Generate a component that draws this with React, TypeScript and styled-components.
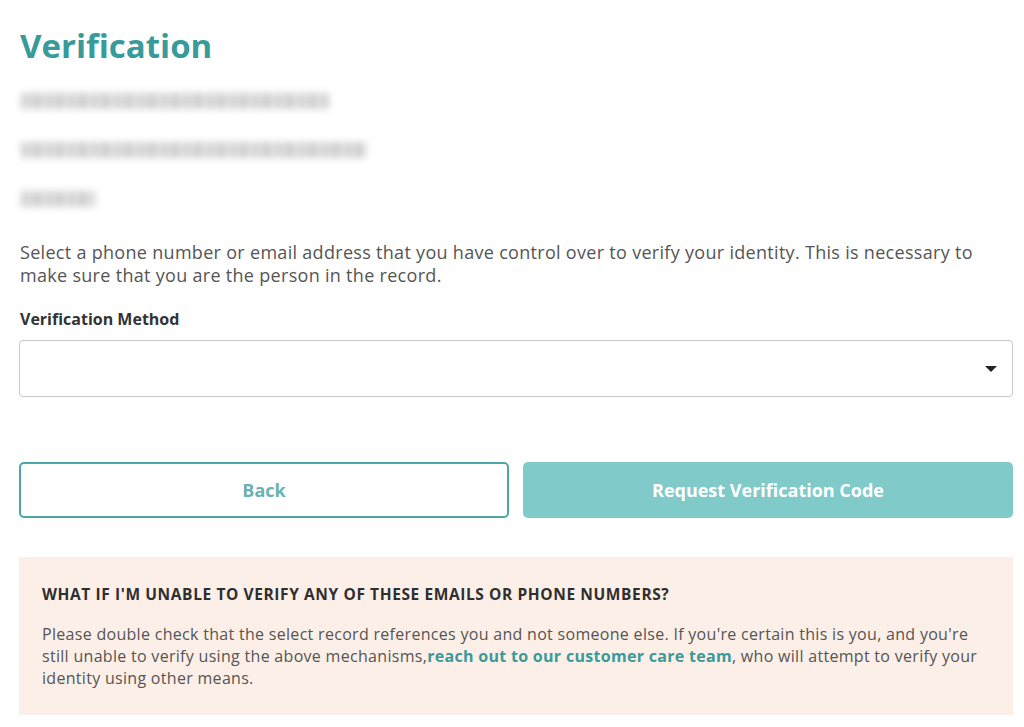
import React from "react";
import styled, { createGlobalStyle } from "styled-components";

const GlobalStyle = createGlobalStyle`
  body {
    margin: 0;
    background: #fff;
    font-family: "Open Sans", Lato, sans-serif;
    color: #4a4a4a;
  }
`;

const StyledPage = styled.div`
  padding: 24px 11px 0 19px;
  display: flex;
  flex-direction: column;
`;

const StyledTitle = styled.h1`
  margin: 0 0 0 1px;
  font-size: 33px;
  font-weight: 700;
  color: #389b9b;
  line-height: 44px;
`;

const StyledBlurredLines = styled.div`
  display: flex;
  flex-direction: column;
  gap: 33px;
  margin-top: 25px;
  padding-left: 2px;
`;

const StyledBlurLine = styled.div<{ $width: number }>`
  width: ${(p) => p.$width}px;
  height: 16px;
  background: repeating-linear-gradient(90deg, #c4c4c4 0 9px, #e4e4e4 9px 12px, #b8b8b8 12px 20px, #ededed 20px 23px);
  filter: blur(3.5px);
  opacity: 0.75;
`;

const StyledIntro = styled.p`
  margin: 34px 0 0 1px;
  font-size: 18px;
  letter-spacing: 0.3px;
  line-height: 23px;
  color: #555;
  white-space: nowrap;
`;

const StyledLabel = styled.label`
  display: block;
  margin: 21px 0 0 1px;
  font-size: 16px;
  line-height: 22px;
  font-weight: 700;
  color: #333;
`;

const StyledSelect = styled.div`
  margin-top: 10px;
  height: 57px;
  box-sizing: border-box;
  border: 1px solid #c8c8c8;
  border-radius: 4px;
  display: flex;
  align-items: center;
  justify-content: flex-end;
  padding-right: 15px;
`;

const StyledCaret = styled.span`
  width: 0;
  height: 0;
  border-left: 6px solid transparent;
  border-right: 6px solid transparent;
  border-top: 6px solid #222;
`;

const StyledButtonRow = styled.div`
  display: grid;
  grid-template-columns: 1fr 1fr;
  gap: 14px;
  margin-top: 65px;
`;

const StyledButton = styled.button<{ $primary?: boolean }>`
  height: 56px;
  box-sizing: border-box;
  border-radius: 5px;
  font-family: "Open Sans", sans-serif;
  font-size: 18px;
  font-weight: 700;
  cursor: pointer;
  border: ${(p) => (p.$primary ? "none" : "2px solid #4aa7a7")};
  background: ${(p) => (p.$primary ? "#80cbc9" : "#fff")};
  color: ${(p) => (p.$primary ? "#fff" : "#6cb2b2")};
`;

const StyledNotice = styled.div`
  margin-top: 39px;
  background: #fcefe7;
  padding: 26px 22px 26px 23px;
`;

const StyledNoticeTitle = styled.h2`
  margin: 0;
  font-size: 15.5px;
  letter-spacing: 0.6px;
  font-weight: 700;
  color: #2f2f2f;
  text-transform: uppercase;
  line-height: 22px;
`;

const StyledNoticeText = styled.p`
  margin: 18px 0 0;
  font-size: 16px;
  letter-spacing: 0.3px;
  line-height: 22px;
  color: #555;
  white-space: nowrap;
`;

const StyledLink = styled.a`
  color: #3a9a9a;
  font-weight: 700;
  text-decoration: none;
`;

export default function App(): JSX.Element {
  return (
    <StyledPage>
      <GlobalStyle />
      <StyledTitle>Verification</StyledTitle>
      <StyledBlurredLines>
        <StyledBlurLine $width={308} />
        <StyledBlurLine $width={346} />
        <StyledBlurLine $width={74} />
      </StyledBlurredLines>
      <StyledIntro>
        Select a phone number or email address that you have control over to verify your identity. This is necessary to
        <br />
        make sure that you are the person in the record.
      </StyledIntro>
      <StyledLabel>Verification Method</StyledLabel>
      <StyledSelect>
        <StyledCaret />
      </StyledSelect>
      <StyledButtonRow>
        <StyledButton>Back</StyledButton>
        <StyledButton $primary>Request Verification Code</StyledButton>
      </StyledButtonRow>
      <StyledNotice>
        <StyledNoticeTitle>What if I'm unable to verify any of these emails or phone numbers?</StyledNoticeTitle>
        <StyledNoticeText>
          Please double check that the select record references you and not someone else. If you're certain this is you, and you're
          <br />
          still unable to verify using the above mechanisms,
          <StyledLink href="#">reach out to our customer care team</StyledLink>, who will attempt to verify your
          <br />
          identity using other means.
        </StyledNoticeText>
      </StyledNotice>
    </StyledPage>
  );
}
